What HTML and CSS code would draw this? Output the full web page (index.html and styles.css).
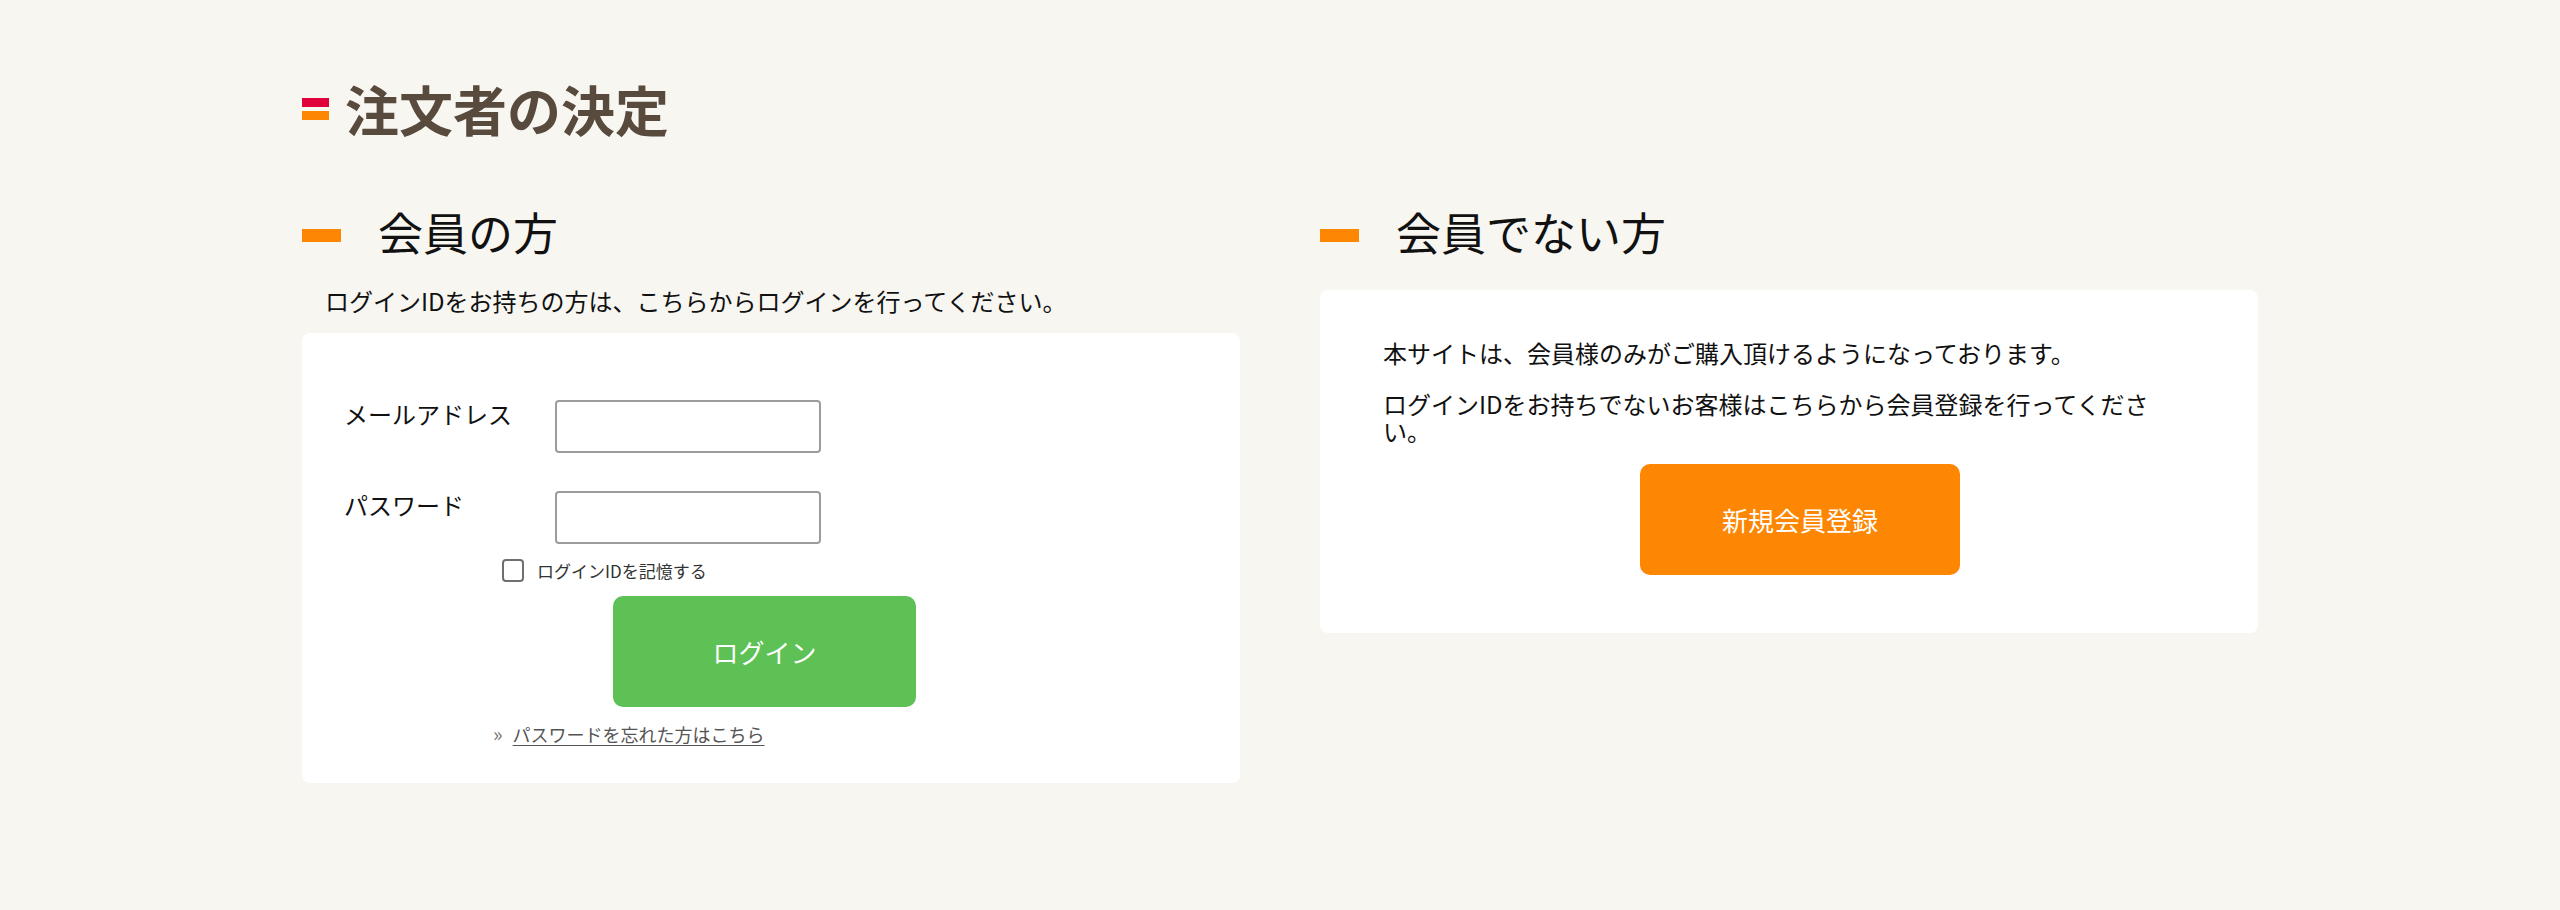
FILE: index.html
```html
<!DOCTYPE html>
<html lang="ja">
<head>
<meta charset="utf-8">
<title>注文者の決定</title>
<link rel="stylesheet" href="styles.css">
</head>
<body>
<div class="page">
  <h1 class="title">
    <span class="title-mark"><span class="mark-red"></span><span class="mark-orange"></span></span>
    <span class="title-text">注文者の決定</span>
  </h1>
  <div class="columns">
    <section class="col">
      <h2 class="heading"><span class="heading-bar"></span>会員の方</h2>
      <p class="lead">ログインIDをお持ちの方は、こちらからログインを行ってください。</p>
      <div class="card card-login">
        <div class="form-grid">
          <label class="field-label" for="mail">メールアドレス</label>
          <input class="field-input" id="mail" type="text">
          <label class="field-label" for="pass">パスワード</label>
          <input class="field-input" id="pass" type="password">
        </div>
        <label class="remember"><input class="check" type="checkbox"><span>ログインIDを記憶する</span></label>
        <div class="login-row"><button class="btn btn-green">ログイン</button></div>
        <div class="forgot"><span class="chev">»</span><a href="#" class="forgot-link">パスワードを忘れた方はこちら</a></div>
      </div>
    </section>
    <section class="col">
      <h2 class="heading"><span class="heading-bar"></span>会員でない方</h2>
      <div class="card card-guest">
        <p class="guest-text">本サイトは、会員様のみがご購入頂けるようになっております。</p>
        <p class="guest-text guest-wrap">ログインIDをお持ちでないお客様はこちらから会員登録を行ってください。</p>
        <div class="register-row"><button class="btn btn-orange">新規会員登録</button></div>
      </div>
    </section>
  </div>
</div>
</body>
</html>
```

FILE: styles.css
```css
* { box-sizing: border-box; }
html, body { margin: 0; padding: 0; }
body {
  background: #f7f6f1;
  font-family: "Noto Sans CJK JP", "Noto Sans", sans-serif;
  color: #111;
  width: 2560px;
  height: 910px;
  overflow: hidden;
}
.page {
  padding: 77px 302px 0;
}
.title {
  display: flex;
  align-items: center;
  gap: 16px;
  margin: 0;
  font-size: 54px;
  line-height: 64px;
  font-weight: 700;
  color: #594a3e;
}
.title-mark {
  display: flex;
  flex-direction: column;
  gap: 4px;
}
.mark-red, .mark-orange {
  display: block;
  width: 27px;
  height: 9px;
}
.mark-red { background: #e2003c; }
.mark-orange { background: #fd8603; }

.columns {
  display: grid;
  grid-template-columns: 938px 938px;
  column-gap: 80px;
  margin-top: 64px;
  align-items: start;
}
.heading {
  display: flex;
  align-items: center;
  margin: 0;
  font-size: 45px;
  line-height: 54px;
  font-weight: 400;
  color: #111;
}
.heading-bar {
  display: block;
  width: 39px;
  height: 13px;
  background: #fd8603;
  margin-right: 37px;
  position: relative;
  top: 3px;
}
.lead {
  margin: 28px 0 18px 23px;
  font-size: 24px;
  line-height: 28px;
}
.card {
  background: #fff;
  border-radius: 8px;
}
.card-login {
  padding: 67px 42px 38px;
  height: 450px;
}
.form-grid {
  display: grid;
  grid-template-columns: 211px 266px;
  row-gap: 38px;
  align-items: start;
}
.field-label {
  font-size: 24px;
  line-height: 28px;
  color: #111;
}
.field-input {
  width: 266px;
  height: 53px;
  border: 2px solid #9c9c9c;
  border-radius: 4px;
  background: #fff;
  margin: 0;
  padding: 0 10px;
  font-size: 20px;
}
.remember {
  display: flex;
  align-items: center;
  gap: 13px;
  margin: 15px 0 0 158px;
  font-size: 17px;
  line-height: 23px;
  color: #333;
}
.check {
  appearance: none;
  -webkit-appearance: none;
  width: 22px;
  height: 23px;
  margin: 0;
  border: 2px solid #6f6f6f;
  border-radius: 4px;
  background: #fff;
}
.login-row {
  margin: 14px 0 0 269px;
}
.btn {
  display: flex;
  align-items: center;
  justify-content: center;
  border: 0;
  color: #fff;
  font-family: "Noto Sans CJK JP", sans-serif;
  cursor: pointer;
}
.btn-green {
  width: 303px;
  height: 111px;
  border-radius: 10px;
  background: #5dc156;
  font-size: 26px;
}
.forgot {
  display: flex;
  align-items: baseline;
  gap: 10px;
  margin: 16px 0 0 149px;
  font-size: 18px;
  line-height: 22px;
  color: #555;
}
.chev {
  font-size: 20px;
  color: #777;
}
.forgot-link {
  color: #555;
  text-decoration: underline;
  text-underline-offset: 3px;
}
.card-guest {
  margin-top: 31px;
  padding: 49px 0 58px 63px;
}
.guest-text {
  margin: 0 0 24px;
  font-size: 24px;
  line-height: 27px;
  color: #111;
}
.guest-wrap {
  width: 806px;
  margin-bottom: 0;
}
.register-row {
  margin: 20px 0 0 257px;
}
.btn-orange {
  width: 320px;
  height: 111px;
  border-radius: 10px;
  background: #fd8603;
  font-size: 26px;
}
```
